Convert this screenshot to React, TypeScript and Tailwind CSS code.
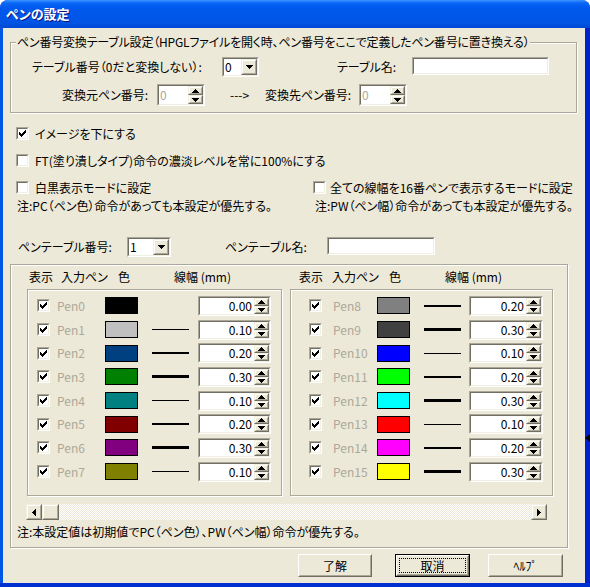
import React from "react";

type Pen = { n: number; color: string; w: number };

const pens: Pen[] = [
  { n: 0, color: "#000000", w: 0 },
  { n: 1, color: "#C0C0C0", w: 0.1 },
  { n: 2, color: "#004080", w: 0.2 },
  { n: 3, color: "#008000", w: 0.3 },
  { n: 4, color: "#008080", w: 0.1 },
  { n: 5, color: "#800000", w: 0.2 },
  { n: 6, color: "#800080", w: 0.3 },
  { n: 7, color: "#808000", w: 0.1 },
  { n: 8, color: "#808080", w: 0.2 },
  { n: 9, color: "#404040", w: 0.3 },
  { n: 10, color: "#0000FF", w: 0.1 },
  { n: 11, color: "#00FF00", w: 0.2 },
  { n: 12, color: "#00FFFF", w: 0.3 },
  { n: 13, color: "#FF0000", w: 0.1 },
  { n: 14, color: "#FF00FF", w: 0.2 },
  { n: 15, color: "#FFFF00", w: 0.3 },
];

const checkPat = ["......x", ".....xx", "x...xxx", "xx.xxx.", "xxxxx..", ".xxx...", "..x...."];

function CheckMark() {
  return (
    <svg width="7" height="7" viewBox="0 0 7 7" shapeRendering="crispEdges">
      {checkPat.flatMap((row, y) =>
        row.split("").map((c, x) =>
          c === "x" ? <rect key={`${x}-${y}`} x={x} y={y} width="1" height="1" fill="#000" /> : null
        )
      )}
    </svg>
  );
}

function CheckBox({ checked }: { checked?: boolean }) {
  return (
    <div className="w-[13px] h-[13px] shrink-0 border border-t-[#ACA899] border-l-[#ACA899] border-r-white border-b-white">
      <div className="w-full h-full border border-t-[#716F64] border-l-[#716F64] border-r-[#F1EFE2] border-b-[#F1EFE2] bg-white flex items-center justify-center">
        {checked && <CheckMark />}
      </div>
    </div>
  );
}

function Tri({ dir }: { dir: "up" | "down" | "left" | "right" }) {
  if (dir === "up")
    return (
      <svg width="7" height="4" viewBox="0 0 7 4" shapeRendering="crispEdges">
        <path d="M3 0h1v1h1v1h1v1h1v1H0V3h1V2h1V1h1z" fill="#000" />
      </svg>
    );
  if (dir === "down")
    return (
      <svg width="7" height="4" viewBox="0 0 7 4" shapeRendering="crispEdges">
        <path d="M0 0h7v1H6v1H5v1H4v1H3V3H2V2H1V1H0z" fill="#000" />
      </svg>
    );
  if (dir === "left")
    return (
      <svg width="4" height="7" viewBox="0 0 4 7" shapeRendering="crispEdges">
        <path d="M3 0h1v7H3V6H2V5H1V4H0V3h1V2h1V1h1z" fill="#000" />
      </svg>
    );
  return (
    <svg width="4" height="7" viewBox="0 0 4 7" shapeRendering="crispEdges">
      <path d="M0 0h1v1h1v1h1v1h1v1H3v1H2v1H1v1H0z" fill="#000" />
    </svg>
  );
}

function RaisedSmall({ className, children }: { className?: string; children?: React.ReactNode }) {
  return (
    <div className={`border border-t-[#F1EFE2] border-l-[#F1EFE2] border-r-[#716F64] border-b-[#716F64] bg-[#ECE9D8] ${className ?? ""}`}>
      <div className="w-full h-full border border-t-white border-l-white border-r-[#ACA899] border-b-[#ACA899] flex items-center justify-center">
        {children}
      </div>
    </div>
  );
}

function Sunken({ className, children }: { className?: string; children?: React.ReactNode }) {
  return (
    <div className={`shrink-0 border border-t-[#ACA899] border-l-[#ACA899] border-r-white border-b-white ${className ?? ""}`}>
      <div className="w-full h-full border border-t-[#716F64] border-l-[#716F64] border-r-[#F1EFE2] border-b-[#F1EFE2] bg-white flex">
        {children}
      </div>
    </div>
  );
}

function Combo({ value, className }: { value: string; className: string }) {
  return (
    <Sunken className={className}>
      <div className="flex-1 pl-[1px] flex items-center leading-[14px]">{value}</div>
      <RaisedSmall className="w-[16px] h-full">
        <Tri dir="down" />
      </RaisedSmall>
    </Sunken>
  );
}

function Spin({ value, className, disabled, right }: { value: string; className: string; disabled?: boolean; right?: boolean }) {
  return (
    <Sunken className={className}>
      <div
        className={`flex-1 flex items-center leading-[14px] ${right ? "justify-end pr-[2px]" : "pl-[1px]"} ${
          disabled ? "text-[#ACA899]" : "text-black"
        }`}
      >
        {value}
      </div>
      <div className="w-[15px] h-full flex flex-col">
        <RaisedSmall className="flex-1">
          <Tri dir="up" />
        </RaisedSmall>
        <RaisedSmall className="flex-1">
          <Tri dir="down" />
        </RaisedSmall>
      </div>
    </Sunken>
  );
}

const etched = "border border-[#ACA899] shadow-[1px_1px_0_#ffffff,inset_1px_1px_0_#ffffff]";

type GroupCfg = { pl: string; penMl: string; penW: string; spinMl: string; spinW: string };

function PenGroup({ list, cfg }: { list: Pen[]; cfg: GroupCfg }) {
  return (
    <div className={`h-[207px] ${etched} pt-[4px] ${cfg.pl}`}>
      {list.map((p) => {
        const lw = p.w === 0 ? 0 : Math.round(p.w * 10);
        return (
          <div key={p.n} className="h-[23.7px] flex items-center">
            <CheckBox checked />
            <div className={`${cfg.penMl} ${cfg.penW} text-[#ACA899] leading-[14px]`}>Pen{p.n}</div>
            <div className="w-[33px] h-[17px] border border-black" style={{ backgroundColor: p.color }} />
            <div className="ml-[14px] w-[37px] flex items-center">
              {lw > 0 && <div className="w-full bg-black" style={{ height: `${lw}px` }} />}
            </div>
            <Spin value={p.w.toFixed(2)} right className={`${cfg.spinMl} ${cfg.spinW} h-[20px]`} />
          </div>
        );
      })}
    </div>
  );
}

function PushButton({ label, def, className }: { label: string; def?: boolean; className: string }) {
  if (def) {
    return (
      <div className={`border border-black ${className}`}>
        <div className="w-full h-full border border-t-white border-l-white border-r-[#716F64] border-b-[#716F64] bg-[#ECE9D8]">
          <div className="w-full h-full border border-t-[#ECE9D8] border-l-[#ECE9D8] border-r-[#ACA899] border-b-[#ACA899] p-[1px]">
            <div className="w-full h-full border border-dotted border-black flex items-center justify-center leading-[14px]">
              {label}
            </div>
          </div>
        </div>
      </div>
    );
  }
  return (
    <div className={`border border-t-white border-l-white border-r-[#716F64] border-b-[#716F64] bg-[#ECE9D8] ${className}`}>
      <div className="w-full h-full border border-t-[#ECE9D8] border-l-[#ECE9D8] border-r-[#ACA899] border-b-[#ACA899] flex items-center justify-center leading-[14px]">
        {label}
      </div>
    </div>
  );
}

export default function App() {
  return (
    <div className="w-[590px] h-[587px] bg-white relative font-['Noto_Sans_CJK_JP',sans-serif] text-[12px] leading-[14px] text-black [font-feature-settings:'palt']">
      <div className="w-full h-full flex flex-col rounded-t-[8px] overflow-hidden bg-[#0831D9]">
        <div className="h-[28px] shrink-0 bg-[linear-gradient(to_bottom,#3D95FF_0px,#0A66F6_3px,#0058EE_8px,#0055E5_22px,#0049D6_28px)] flex items-center pl-[6px]">
          <span className="text-white font-bold text-[13px] leading-[16px] [text-shadow:1px_1px_0_#0A1883]">ペンの設定</span>
        </div>
        <div className="flex-1 flex min-h-0">
          <div className="w-[3px] bg-[#0055E5]" />
          <div className="w-[582px] bg-[#ECE9D8] flex flex-col">
            {/* Group 1 */}
            <div className={`ml-[7px] mt-[14px] w-[567px] h-[71px] shrink-0 ${etched}`}>
              <div className="-mt-[8px] ml-[5px] w-fit px-[1px] bg-[#ECE9D8] leading-[14px] tracking-[-0.2px]">
                ペン番号変換テーブル設定（HPGLファイルを開く時、ペン番号をここで定義したペン番号に置き換える）
              </div>
              <div className="mt-[8px] h-[20px] flex items-center">
                <div className="ml-[21px] w-[190px]">テーブル番号（0だと変換しない）:</div>
                <Combo value="0" className="w-[37px] h-[20px]" />
                <div className="ml-[78px] w-[75px]">テーブル名:</div>
                <Sunken className="w-[137px] h-[18px] self-start" />
              </div>
              <div className="mt-[7px] h-[22px] flex items-center">
                <div className="ml-[51px] w-[95px]">変換元ペン番号:</div>
                <Spin value="0" disabled className="w-[48px] h-[22px]" />
                <div className="ml-[25px] w-[35px]">---&gt;</div>
                <div className="w-[94px]">変換先ペン番号:</div>
                <Spin value="0" disabled className="w-[48px] h-[22px]" />
              </div>
            </div>

            {/* Checkboxes */}
            <div className="mt-[14px] ml-[13px] h-[13px] flex items-center gap-[6px]">
              <CheckBox checked />
              <span>イメージを下にする</span>
            </div>
            <div className="mt-[14px] ml-[13px] h-[13px] flex items-center gap-[6px]">
              <CheckBox />
              <span>FT(塗り潰しタイプ)命令の濃淡レベルを常に100%にする</span>
            </div>
            <div className="mt-[14px] ml-[13px] h-[13px] flex items-center">
              <div className="w-[297px] flex items-center gap-[6px]">
                <CheckBox />
                <span>白黒表示モードに設定</span>
              </div>
              <div className="flex items-center gap-[4px]">
                <CheckBox />
                <span>全ての線幅を16番ペンで表示するモードに設定</span>
              </div>
            </div>
            <div className="mt-[5px] ml-[14px] h-[14px] flex items-center">
              <div className="w-[298px]">注:PC（ペン色）命令があっても本設定が優先する。</div>
              <div>注:PW（ペン幅）命令があっても本設定が優先する。</div>
            </div>

            {/* Pen table row */}
            <div className="mt-[24px] h-[20px] flex items-center">
              <div className="ml-[15px] w-[109px]">ペンテーブル番号:</div>
              <Combo value="1" className="w-[44px] h-[20px]" />
              <div className="ml-[54px] w-[102px]">ペンテーブル名:</div>
              <Sunken className="w-[108px] h-[18px] self-start" />
            </div>

            {/* Big panel */}
            <div className={`ml-[7px] mt-[7px] w-[558px] h-[284px] shrink-0 ${etched} flex flex-col`}>
              <div className="ml-[16px] flex gap-[8px]">
                <div className="w-[255px] flex flex-col">
                  <div className="mt-[5px] h-[14px] pl-[2px] flex">
                    <span className="w-[32px]">表示</span>
                    <span className="w-[57px]">入力ペン</span>
                    <span className="w-[56px]">色</span>
                    <span>線幅 (mm)</span>
                  </div>
                  <div className="mt-[5px]">
                    <PenGroup
                      list={pens.slice(0, 8)}
                      cfg={{ pl: "pl-[9px]", penMl: "ml-[7px]", penW: "w-[48px]", spinMl: "ml-[9px]", spinW: "w-[73px]" }}
                    />
                  </div>
                </div>
                <div className="w-[263px] flex flex-col">
                  <div className="mt-[5px] h-[14px] pl-[9px] flex">
                    <span className="w-[33px]">表示</span>
                    <span className="w-[57px]">入力ペン</span>
                    <span className="w-[56px]">色</span>
                    <span>線幅 (mm)</span>
                  </div>
                  <div className="mt-[5px]">
                    <PenGroup
                      list={pens.slice(8)}
                      cfg={{ pl: "pl-[18px]", penMl: "ml-[11px]", penW: "w-[44px]", spinMl: "ml-[8px]", spinW: "w-[74px]" }}
                    />
                  </div>
                </div>
              </div>
              {/* Scrollbar */}
              <div className="mt-[8px] ml-[15px] w-[521px] h-[16px] flex">
                <RaisedSmall className="w-[16px] h-[16px]">
                  <Tri dir="left" />
                </RaisedSmall>
                <RaisedSmall className="w-[17px] h-[16px]" />
                <div className="flex-1 bg-[repeating-conic-gradient(#ffffff_0_25%,#ECE9D8_0_50%)] bg-[length:2px_2px]" />
                <RaisedSmall className="w-[16px] h-[16px]">
                  <Tri dir="right" />
                </RaisedSmall>
              </div>
              <div className="mt-[5px] ml-[6px] h-[14px]">注:本設定値は初期値でPC（ペン色）、PW（ペン幅）命令が優先する。</div>
            </div>

            {/* Buttons */}
            <div className="mt-[6px] ml-[295px] flex">
              <PushButton label="了解" className="w-[74px] h-[23px]" />
              <PushButton label="取消" def className="ml-[23px] w-[75px] h-[23px]" />
              <PushButton label="ﾍﾙﾌﾟ" className="ml-[18px] w-[75px] h-[23px]" />
            </div>
          </div>
          <div className="w-[5px] bg-[#0022C8]" />
        </div>
        <div className="h-[4px] shrink-0 bg-[#0030D0]" />
      </div>
      <div className="absolute left-[585px] top-[434px] w-0 h-0 border-y-[4px] border-y-transparent border-r-[5px] border-r-black" />
    </div>
  );
}
